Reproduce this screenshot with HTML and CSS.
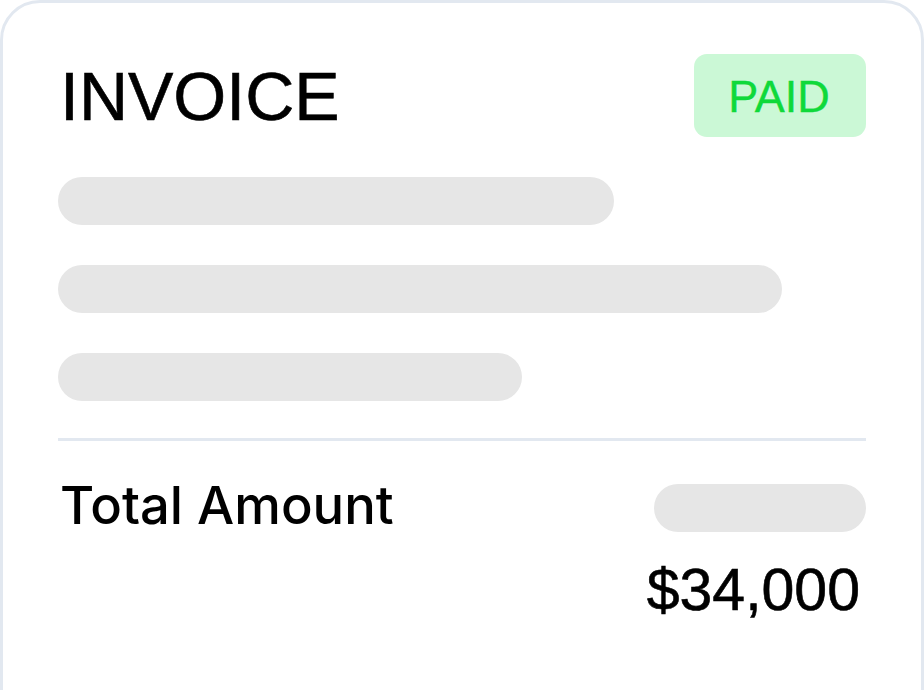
FILE: index.html
```html
<!DOCTYPE html>
<html lang="en">
<head>
<meta charset="utf-8">
<title>Invoice</title>
<link rel="stylesheet" href="styles.css">
</head>
<body>
  <div class="card">
    <div class="header">
      <h1 class="title">INVOICE</h1>
      <span class="badge">PAID</span>
    </div>
    <div class="lines">
      <div class="skeleton w1"></div>
      <div class="skeleton w2"></div>
      <div class="skeleton w3"></div>
    </div>
    <div class="divider"></div>
    <div class="total-row">
      <span class="total-label">Total Amount</span>
      <div class="skeleton w4"></div>
    </div>
    <div class="amount">$34,000</div>
  </div>
</body>
</html>
```

FILE: styles.css
```css
html, body {
  margin: 0;
  padding: 0;
  background: #ffffff;
  overflow: hidden;
}

body {
  width: 924px;
  height: 690px;
  font-family: "Liberation Sans", Arial, sans-serif;
  color: #000;
}

.card {
  box-sizing: border-box;
  width: 924px;
  min-height: 760px;
  border: 3px solid #e2e8f0;
  border-radius: 40px;
  background: #ffffff;
  padding: 51px 55px 0;
}

.header {
  display: flex;
  justify-content: space-between;
  align-items: center;
  height: 83px;
}

.title {
  margin: 0 0 0 2px;
  font-size: 68px;
  font-weight: 400;
  line-height: 1;
  -webkit-text-stroke: 0.6px #000;
}

.badge {
  box-sizing: border-box;
  width: 172px;
  height: 83px;
  display: flex;
  align-items: center;
  justify-content: center;
  background: #cbf8d6;
  color: #0fd93a;
  border-radius: 13px;
  font-size: 45px;
  line-height: 1;
  padding-top: 2px;
  padding-right: 2px;
  -webkit-text-stroke: 0.4px #0fd93a;
}

.lines {
  display: flex;
  flex-direction: column;
  gap: 40px;
  margin-top: 40px;
}

.skeleton {
  height: 48px;
  border-radius: 24px;
  background: #e6e6e6;
}

.w1 { width: 556px; }
.w2 { width: 724px; }
.w3 { width: 464px; }
.w4 { width: 212px; }

.divider {
  height: 3px;
  background: #e2e8f0;
  margin-top: 37px;
}

.total-row {
  display: flex;
  justify-content: space-between;
  align-items: center;
  margin-top: 43px;
}

.total-label {
  font-family: Inter, "Liberation Sans", sans-serif;
  font-size: 52.5px;
  font-weight: 500;
  line-height: 1;
  margin-left: 2px;
  margin-top: -5px;
}

.amount {
  text-align: right;
  font-size: 59px;
  line-height: 64px;
  margin-top: 26px;
  margin-right: 6px;
  -webkit-text-stroke: 0.6px #000;
}
```
